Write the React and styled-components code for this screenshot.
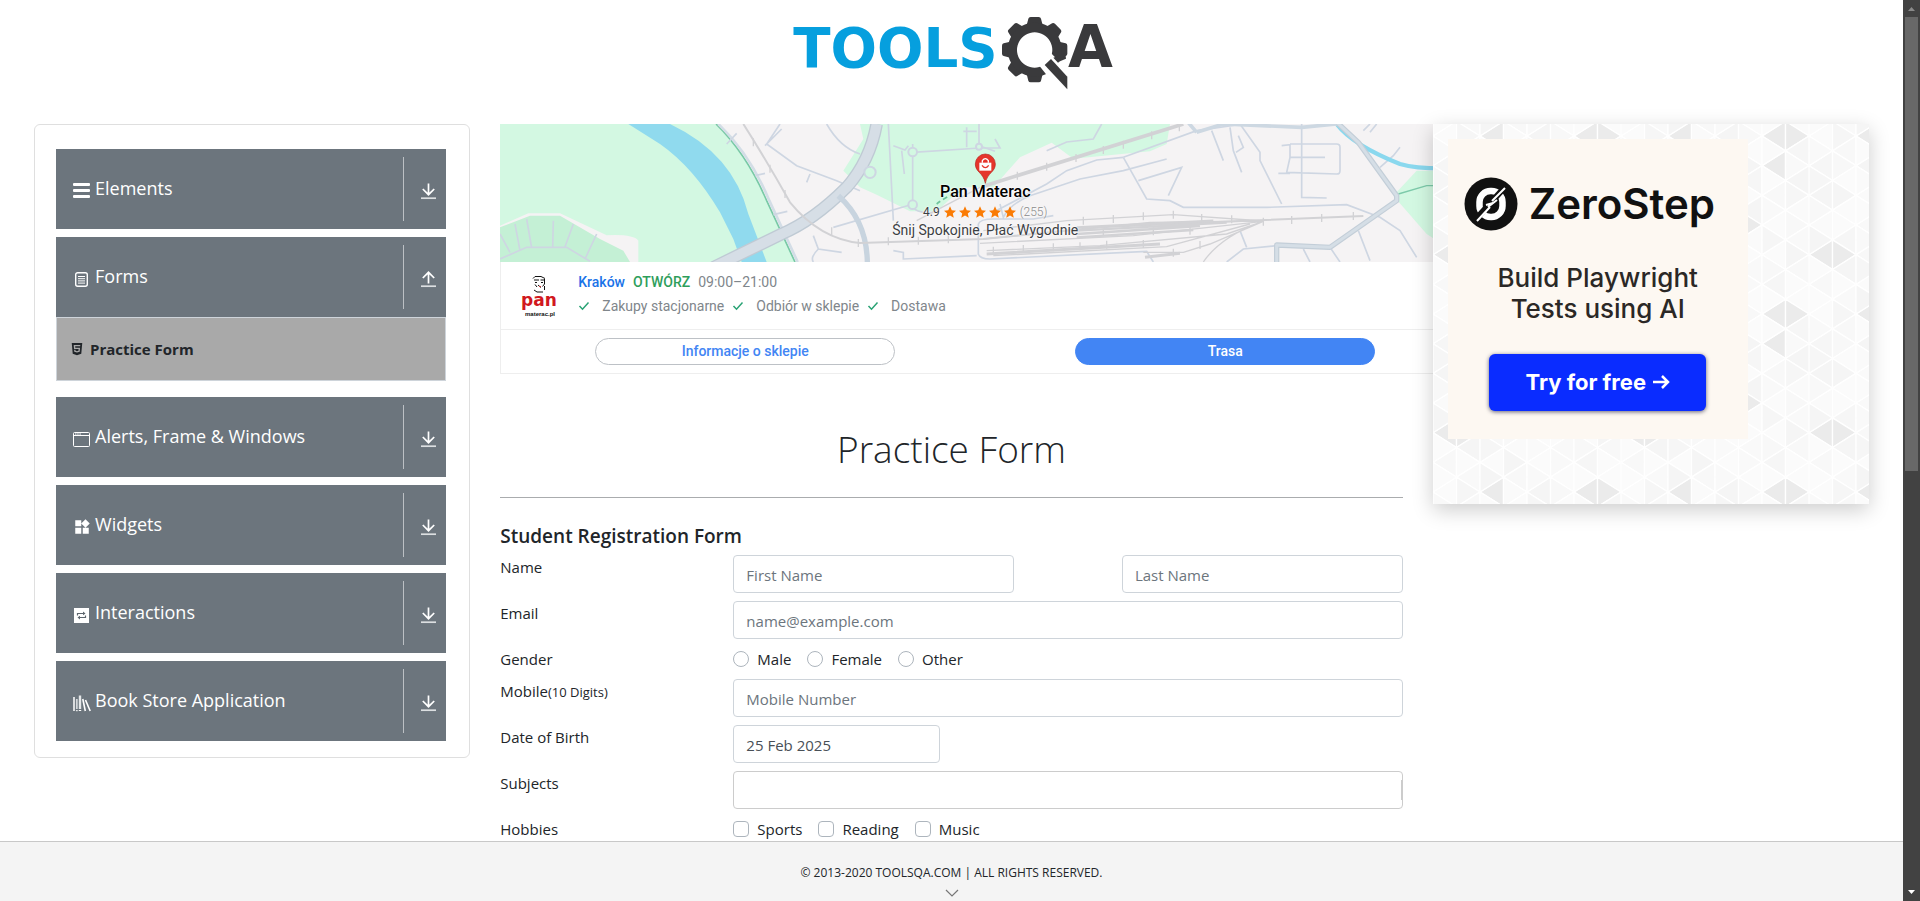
import React from "react";
import styled, { createGlobalStyle } from "styled-components";
import { MdWidgets } from "react-icons/md";
import { FaHtml5 } from "react-icons/fa";

const GlobalStyle = createGlobalStyle`
  *, *::before, *::after { box-sizing: border-box; }
  body {
    margin: 0;
    background: #fff;
    color: #212529;
    font-family: "Open Sans", "Noto Sans", sans-serif;
    font-size: 15px;
    line-height: 24px;
  }
`;

/* ---------- page frame ---------- */

const Shell = styled.div`
  display: flex;
  height: 100vh;
`;

const Page = styled.div`
  flex: 1;
  min-width: 0;
  display: flex;
  flex-direction: column;
  overflow: hidden;
`;

const Content = styled.div`
  flex: 1;
  min-height: 0;
  overflow: hidden;
`;

const Header = styled.header`
  display: flex;
  justify-content: center;
  height: 124px;
`;

const Columns = styled.div`
  display: grid;
  grid-template-columns: minmax(0, 1fr) minmax(0, 2fr) minmax(0, 1fr);
  align-items: start;
  padding: 0 1%;
`;

const Column = styled.div`
  padding: 0 15px;
  position: relative;
`;

const Footer = styled.footer`
  flex: none;
  display: flex;
  flex-direction: column;
  align-items: center;
  height: 60px;
  padding-top: 20px;
  background: #f4f4f4;
  border-top: 1px solid #c8c8c8;
  font-size: 12px;
  line-height: 22px;
`;

const Track = styled.div`
  flex: none;
  display: flex;
  flex-direction: column;
  align-items: center;
  justify-content: space-between;
  width: 17px;
  background: #424242;
`;

const Thumb = styled.div`
  width: 13px;
  height: 50.4%;
  background: #686868;
`;

const TrackArrow = styled.svg`
  display: block;
  flex: none;
  width: 17px;
  height: 17px;
`;

const TrackSpace = styled.div`
  flex: 1;
`;

/* ---------- sidebar ---------- */

const Card = styled.nav`
  display: flex;
  flex-direction: column;
  gap: 8px;
  padding: 24px 23px 16px 21px;
  border: 1px solid #dfdfdf;
  border-radius: 6px;
`;

const GroupButton = styled.button`
  display: flex;
  align-items: center;
  width: 100%;
  height: 80px;
  padding: 8px 9px 8px 17px;
  border: 0;
  background: #6c757d;
  color: #fff;
  font: inherit;
  font-size: 18px;
  text-align: left;
`;

const GroupIcon = styled.span`
  display: flex;
  width: 18px;
  padding-top: 4px;
  margin-right: 4px;
`;

const GroupLabel = styled.span`
  flex: 1;
  padding-bottom: 2px;
`;

const GroupArrow = styled.span`
  display: flex;
  align-items: center;
  height: 64px;
  padding: 4px 0 0 16px;
  border-left: 1px solid #bcc0c4;
`;

const SubLink = styled.a`
  display: flex;
  align-items: center;
  gap: 6px;
  height: 64px;
  margin-bottom: 8px;
  padding-left: 13px;
  border: 1px solid #ced4da;
  background: #a9a9a9;
  color: #212529;
  font-size: 15px;
  font-weight: 700;
  text-decoration: none;
`;

/* ---------- map banner ---------- */

const Banner = styled.section`
  width: 970px;
  height: 250px;
  font-family: Roboto, sans-serif;
`;

const MapArea = styled.div`
  position: relative;
  height: 138px;
`;

const MapDrawing = styled.svg`
  display: block;
  width: 100%;
  height: 100%;
`;

const Place = styled.div`
  position: absolute;
  inset: 57px 0 0;
  display: flex;
  flex-direction: column;
  align-items: center;
  color: #3c4043;
  font-size: 14px;
  line-height: 18px;
  text-shadow: 0 0 2px #fff, 0 0 2px #fff;
`;

const PlaceName = styled.div`
  color: #000;
  font-size: 16px;
  font-weight: 500;
  line-height: 22px;
`;

const Rating = styled.div`
  display: flex;
  align-items: center;
  gap: 4px;
  font-size: 12px;
`;

const Votes = styled.span`
  color: #8a8a8a;
  font-weight: 300;
`;

const StoreInfo = styled.div`
  display: flex;
  gap: 18px;
  height: 67px;
  padding: 8px 0 0 20px;
  border-left: 1px solid #eee;
`;

const StoreText = styled.div`
  font-size: 14px;
  line-height: 24px;
  color: #80868b;
`;

const StoreLine = styled.div`
  display: flex;
  align-items: center;
  gap: ${(p) => p.$gap}px;
`;

const City = styled.span`
  color: #1a73e8;
  font-weight: 500;
`;

const OpenNow = styled.span`
  color: #2e9e5b;
  font-weight: 500;
`;

const Feature = styled.span`
  display: flex;
  align-items: center;
  gap: 12px;
`;

const BannerActions = styled.div`
  display: grid;
  grid-template-columns: 1fr 1fr;
  justify-items: center;
  align-items: center;
  height: 45px;
  padding: 0 4px;
  border: 1px solid #eee;
`;

const PillLink = styled.a`
  width: 300px;
  border: 1px solid ${(p) => (p.$filled ? "#4285f4" : "#bdc1c6")};
  border-radius: 14px;
  background: ${(p) => (p.$filled ? "#4285f4" : "#fff")};
  color: ${(p) => (p.$filled ? "#fff" : "#4285f4")};
  font-size: 14px;
  font-weight: 500;
  line-height: 25px;
  text-align: center;
  text-decoration: none;
`;

/* ---------- form ---------- */

const Title = styled.h1`
  margin: 51px 0 24px;
  font-size: 37px;
  font-weight: 300;
  line-height: 48px;
  text-align: center;
`;

const Rule = styled.hr`
  margin: 0 0 26px;
  border: 0;
  border-top: 1px solid #aaacae;
`;

const FormHeading = styled.h2`
  margin: 0 0 7px;
  font-size: 19px;
  font-weight: 600;
  line-height: 24px;
`;

const Row = styled.div`
  display: grid;
  grid-template-columns: repeat(12, minmax(0, 1fr));
  margin: 0 -15px 8px;
`;

const Cell = styled.div`
  grid-column: ${(p) => (p.$start ? `${p.$start} / ` : "")} span ${(p) => p.$span};
  padding: 0 15px;
`;

const Small = styled.small`
  font-size: 13px;
`;

const Input = styled.input`
  display: block;
  width: ${(p) => (p.$short ? "207px" : "100%")};
  height: 38px;
  padding: 8px 12px 6px;
  border: 1px solid #ced4da;
  border-radius: 4px;
  background: #fff;
  color: #495057;
  font: inherit;
  &::placeholder { color: #6c757d; opacity: 1; }
`;

const SelectBox = styled.div`
  display: flex;
  align-items: center;
  height: 38px;
  border: 1px solid #ccc;
  border-radius: 4px;
`;

const BareInput = styled.input`
  flex: 1;
  min-width: 0;
  height: 24px;
  padding: 0 8px;
  border: 0;
  background: none;
  font: inherit;
`;

const Separator = styled.span`
  width: 1px;
  height: 20px;
  background: #ccc;
`;

const Choices = styled.div`
  display: flex;
  gap: 16px;
`;

const Choice = styled.label`
  display: flex;
  align-items: center;
  gap: 8px;
`;

const Tick = styled.input`
  appearance: none;
  width: 16px;
  height: 16px;
  margin: 0;
  border: 1px solid #adb5bd;
  border-radius: ${(p) => (p.type === "radio" ? "50%" : "4px")};
  background: #fff;
`;

/* ---------- right panel ---------- */

const Promo = styled.aside`
  position: relative;
  height: 380px;
  padding: 15px;
  background: #fafafa;
  box-shadow: 0 6px 20px rgba(0, 0, 0, 0.2);
`;

const PromoPattern = styled.svg`
  position: absolute;
  inset: 0;
  width: 100%;
  height: 100%;
`;

const PromoCard = styled.div`
  position: relative;
  display: flex;
  flex-direction: column;
  align-items: center;
  width: 300px;
  height: 300px;
  padding-top: 38px;
  background: #fdf8f2;
  font-family: Inter, sans-serif;
`;

const Brand = styled.div`
  display: flex;
  align-items: center;
  align-self: flex-start;
  gap: 11px;
  margin-left: 16px;
  color: #111;
  font-size: 42px;
  font-weight: 600;
  line-height: 54px;
`;

const Pitch = styled.p`
  margin: 31px 0 30px;
  color: #2b2826;
  font-size: 26px;
  font-weight: 500;
  line-height: 31px;
  text-align: center;
`;

const TryLink = styled.a`
  display: flex;
  align-items: center;
  justify-content: center;
  gap: 7px;
  width: 217px;
  height: 57px;
  padding-bottom: 2px;
  border-radius: 6px;
  background: #0a2cff;
  box-shadow: 0 1px 4px rgba(0, 0, 40, 0.6);
  color: #fff;
  font-size: 22px;
  font-weight: 700;
  text-decoration: none;
`;

/* ---------- drawings ---------- */

function Logo() {
  const teeth = [0, 45, 90, 135, 180, 225, 270, 315];
  return (
    <svg width="360" height="110" viewBox="4 0 1080 330" role="img" aria-label="ToolsQA">
      <g fontFamily="'DejaVu Sans', sans-serif" fontWeight="700">
        <text x="68" y="201" fontSize="164" fill="#069fde">TOOLS</text>
        <text x="892" y="201" fontSize="174" fill="#3a3a3c">A</text>
      </g>
      <g fill="#3a3a3c">
        {teeth.map((a) => (
          <path key={a} transform={`rotate(${a} 792 149)`} d="M768 76 L773 56 Q774 51 780 51 H804 Q810 51 811 56 L816 76 Z" />
        ))}
        <path fillRule="evenodd" d="M792 68 a81 81 0 1 0 0.1 0 Z M792 97 a53 53 0 1 1 -0.1 0 Z" />
      </g>
      <path d="M800 190 L838 156 L905 226 L905 290 L880 290 Z" fill="#fff" />
      <path d="M822 195 L841 177 L890 230 V268 Z" fill="#3a3a3c" />
      <path d="M862 188 L848 173 L884 160 L886 176 L868 184 Z" fill="#3a3a3c" />
    </svg>
  );
}

const ArrowToLine = ({ up }) => (
  <svg width="17" height="17" viewBox="0 0 17 17" fill="none" stroke="#fff">
    <path d={up ? "M8.500 12.500V1.500M2.800 7L8.500 1.300L14.200 7" : "M8.500 .500V11.500M2.800 6L8.500 11.700L14.200 6"} strokeWidth="1.700" />
    <path d="M1 15.200H16" strokeWidth="1.700" stroke="#dcdfe1" />
  </svg>
);

const BarsIcon = () => (
  <svg width="18" height="18" viewBox="0 0 18 18" fill="#fff">
    <rect x="0" y="1" width="17" height="3" rx="1" />
    <rect x="0" y="7" width="17" height="3" rx="1" />
    <rect x="0" y="13" width="17" height="3" rx="1" />
  </svg>
);

const FormIcon = () => (
  <svg width="17" height="17" viewBox="0 0 17 17" fill="none" stroke="#fff">
    <rect x="2.700" y="1.700" width="11.600" height="13.600" rx="2" strokeWidth="1.400" />
    <path d="M5 5.500H12M5 7.700H12M5 9.900H12M5 12.100H12" strokeWidth="1" />
  </svg>
);

const WindowIcon = () => (
  <svg width="17" height="17" viewBox="0 0 17 17" fill="none" stroke="#fff">
    <rect x="0.500" y="1.500" width="16" height="14" rx="1" />
    <path d="M1 4.500H16" />
    <path d="M2 3H8" strokeDasharray="1.500 .700" />
  </svg>
);

const RepeatIcon = () => (
  <svg width="17" height="17" viewBox="0 0 17 17" fill="none" stroke="#5c656d">
    <rect x="1" y="1" width="15" height="15" fill="#fff" stroke="none" />
    <path d="M4.500 8.500V6.500H11M12.500 8.500V10.500H6" strokeWidth="1.200" />
    <path d="M10 4.500L12.500 6.500L10 8.200ZM7 8.800L4.500 10.500L7 12.500Z" fill="#5c656d" stroke="none" />
  </svg>
);

const BooksIcon = () => (
  <svg width="18" height="18" viewBox="0 0 18 18" fill="none" stroke="#fff">
    <path d="M1 3V17" strokeWidth="1.500" />
    <path d="M3.800 5V15" strokeWidth="1.800" stroke="#d5d8db" />
    <path d="M3.800 16.200V17.200" strokeWidth="1.800" />
    <path d="M7 1.500V15" strokeWidth="2.400" stroke="#e6e8ea" />
    <path d="M7 16V17" strokeWidth="2.400" />
    <path d="M9.800 5L12.300 17" strokeWidth="1.600" />
    <path d="M12.500 6L17.200 17" strokeWidth="1.600" />
  </svg>
);

const Check = () => (
  <svg width="12" height="10" viewBox="0 0 12 10" fill="none" stroke="#2aa375" strokeWidth="1.500">
    <path d="M1.500 5L4.500 8.200L10.500 1.500" />
  </svg>
);

const Star = () => (
  <svg width="12" height="12" viewBox="0 0 24 24" fill="#fa7b05">
    <path d="M12 0.500L15.500 8.500L24 9.300L17.600 15L19.500 23.500L12 19L4.500 23.500L6.400 15L0 9.300L8.500 8.500Z" />
  </svg>
);

function StoreLogo() {
  return (
    <svg width="39" height="48" viewBox="0 0 39 48" role="img" aria-label="pan materac.pl">
      <g fill="none" stroke="#111" strokeWidth="1">
        <path d="M12 8.500L14 6.500H20L24 8.500M13 10H18M19.500 10H24M14 12.500H16M20 12.500H22M23.500 9V14L21.500 16.500M14 14.500L16 17M17 15L20 17.500M13 20L16 22H22M23.500 16V20" />
      </g>
      <path d="M18 16.500h2" stroke="#c33" />
      <text x="0" y="36" fontFamily="'DejaVu Sans', sans-serif" fontSize="17" fontWeight="700" fill="#d11820">pan</text>
      <text x="4" y="46" fontFamily="'Liberation Sans', sans-serif" fontSize="6" fontWeight="700" fill="#111">materac.pl</text>
    </svg>
  );
}

function CityMap() {
  const ticks = (pts) => pts.map(([x, y]) => `M${x} ${y - 12}v24`).join("");
  return (
    <MapDrawing viewBox="0 0 2910 414" preserveAspectRatio="none" aria-hidden="true">
      <rect width="2910" height="414" fill="#f5f3f4" />
      <g fill="#d3f8e2">
        <path d="M0 0H645Q740 90 800 230L885 414H415V350Q400 330 320 334L180 268H85L0 305Z" />
        <path d="M1080 0H2010L2000 60L1950 82L1720 104L1655 56L1560 100L1480 190L1390 190L1310 262L1230 262L1130 212L1080 190L1030 140L1090 45Z" />
        <path d="M2910 140L2750 140L2680 215L2780 330L2910 414Z" />
      </g>
      <path d="M0 310L90 275H180L300 345L370 380L390 414H0Z" fill="#c4f0d5" />
      <path d="M385 0H510Q700 90 745 270L800 414H725L700 345L660 265Q580 130 480 60Z" fill="#90daee" />
      <path d="M648 0Q740 90 800 230L885 414" fill="none" stroke="#78c9a6" strokeWidth="5" />
      <path d="M655 0Q750 90 808 230L893 414" fill="none" stroke="#d3dde6" strokeWidth="8" />
      <g fill="none" stroke="#ced6e2" strokeWidth="5">
        <path d="M0 330L30 385M290 330L255 405M0 405L80 370H200L270 412M80 285L95 372M160 290L158 372M45 300L60 380M220 300L195 368" />
        <path d="M840 0L800 60L890 125L1010 170L1080 200M845 15L795 65M980 0Q1020 70 1080 90M920 175L930 150M765 155L795 148M820 272L862 262M710 28L680 60" />
        <path d="M1165 0L1180 290M1180 65L1215 78L1225 65M1205 80L1213 150M1238 60V240M1238 85L1440 72H1500L1485 45M1240 240L1000 310M1238 240Q1240 270 1300 265" />
        <path d="M940 335L955 375L1025 385M955 375Q930 400 940 414M1180 380L1210 385V405L1430 395" />
        <path d="M1400 10V70M1437 0V65L1485 82M1390 22H1430" />
        <path d="M1640 80L1700 54L1780 45L1805 0M1480 265L1640 180L1700 140L1790 108L1870 100M1590 215L1740 165L1870 140L2000 105" />
        <path d="M1870 100L2090 20L2230 0M1870 100L1940 225L2010 230L2050 250H2300L2540 242L2640 280L2700 320L2750 400M1915 170L2045 130L2005 215" />
        <path d="M2135 20L2170 110M2190 10L2200 80L2225 145M2220 0L2280 85V110L2345 240M2215 35L2230 70L2208 85" />
        <path d="M2405 0V220L2480 222M2345 65L2370 62V100L2360 145L2510 150Q2520 150 2520 140V70Q2520 60 2510 60H2370M2370 100H2475M2335 148H2370" />
        <path d="M2640 130L2680 95L2700 70M2590 20L2610 0M2610 25L2630 0M2220 320L2240 370M2180 414L2230 375L2330 365M2410 375L2430 414M2490 370L2520 414M2575 320L2610 410" />
        <path d="M1435 300Q1440 285 1480 285H1600L1660 275M1435 300V390Q1440 405 1470 405L1940 382L1960 414M1500 240L1510 280Q1530 240 1590 215" />
      </g>
      <path d="M2510 0Q2560 65 2700 120Q2770 140 2910 130" fill="none" stroke="#8ad8ee" strokeWidth="13" />
      <path d="M2695 210L2780 185H2910" fill="none" stroke="#7dcaaa" strokeWidth="4" />
      <g fill="none" strokeLinejoin="round">
        <path d="M640 430L845 330Q940 290 1040 190Q1110 110 1130 0" stroke="#bfcad4" strokeWidth="38" />
        <path d="M640 430L845 330Q940 290 1040 190Q1110 110 1130 0" stroke="#d6dee6" strokeWidth="30" />
        <path d="M1015 215Q1100 290 1102 414" stroke="#c8d4df" strokeWidth="16" />
        <path d="M2505 -10L2575 55L2690 215V230L2490 370L2330 363V414" stroke="#c3ced8" strokeWidth="16" />
        <path d="M2505 -10L2575 55L2690 215V230L2490 370L2330 363V414" stroke="#d5dee6" strokeWidth="9" />
        <path d="M2090 25L2060 -10M2090 25L2170 0L2405 10L2510 0" stroke="#cdd8e2" strokeWidth="11" />
      </g>
      <g fill="#d3f8e2" stroke="#ced6e2" strokeWidth="6">
        <circle cx="1238" cy="84" r="13" /><circle cx="1238" cy="242" r="13" /><circle cx="1437" cy="68" r="9" />
        <circle cx="1110" cy="145" r="17" />
      </g>
      <g fill="none" stroke="#d2d2d5">
        <path d="M1455 185L2050 0" strokeWidth="11" />
        <path d="M730 0Q800 110 870 235Q960 345 1080 357L1450 345L1800 310L2240 290L2590 276" strokeWidth="6" />
        <path d="M1450 320L1700 290L2020 272L2290 291L1950 295L1450 345M1440 358L1900 335L2290 292L2130 360L2050 385H1930M1460 380L1800 365L2180 330L2290 292M1480 395L2000 368L2250 300M2110 414Q2160 340 2280 295M1250 290L1440 190" strokeWidth="4" />
        <path d="M1730 310L2140 290M1730 320L2180 296M1730 330L2100 306M1730 340L2080 318" strokeWidth="7" />
        <path d="M1460 390L1980 360M1935 400L2040 388" strokeWidth="9" />
        <path d={ticks([[760,55],[810,134],[855,210],[995,322],[1075,357],[1165,352],[1255,350],[1345,346],[1552,155],[1640,128],[1728,102],[1810,78],[1870,62],[1955,34],[2038,10],[1750,290],[1840,285],[1930,277],[2020,272],[2105,282],[2195,286],[2290,293],[2375,288],[2465,282],[2560,276],[1480,380],[1570,375],[1660,370],[1740,367],[1820,362],[1930,360],[2020,386],[2100,363],[1600,320],[1810,325],[1960,322],[2070,320]])} strokeWidth="4" />
      </g>
      <path d="M1310 240Q1340 215 1390 200" fill="none" stroke="#6fc49d" strokeWidth="5" strokeDasharray="14 10" />
      <path d="M1456 178C1450 145 1426 145 1426 120A30 30 0 0 1 1486 120C1486 145 1462 145 1456 178Z" fill="#e5352b" stroke="#b3261e" strokeWidth="2" />
      <path d="M1438 116H1474V140H1438Z" fill="#fff" />
      <path d="M1447 116V110Q1456 98 1465 110V116" fill="none" stroke="#fff" strokeWidth="4" />
      <path d="M1446 124Q1456 138 1466 124" fill="none" stroke="#e5352b" strokeWidth="4" />
    </MapDrawing>
  );
}

const TONES = ["#fbfbfb", "#f8f8f8", "#fafafa", "#f6f6f6", "#fbfbfb", "#f9f9f9", "#f5f5f5"];
const DARK_LEFT = ["2-0", "6-0", "6-1", "0-4"];
const DARK_RIGHT = ["7-0", "1-4", "5-3"];

function Triangles() {
  const w = 70.5;
  const h = 89;
  const cells = [];
  for (let c = 0; c < 8; c++) {
    for (let r = -1; r < 7; r++) {
      const row = (r + 6) % 6;
      const id = `${c}-${row}`;
      const even = c % 2 === 0;
      const leftY = (even ? 36 : -8.5) + r * h;
      const rightY = (even ? -8.5 : 36) + r * h;
      const x = c * w;
      const left = `${x},${leftY} ${x + w},${leftY - h / 2} ${x + w},${leftY + h / 2}`;
      const right = `${x + w},${rightY} ${x},${rightY - h / 2} ${x},${rightY + h / 2}`;
      const leftTone = DARK_LEFT.includes(id) ? "#ebebeb" : TONES[(c * 5 + row * 3) % 7];
      const rightTone = DARK_RIGHT.includes(id) ? "#ebebeb" : TONES[(c * 3 + row * 5) % 7];
      cells.push(<polygon key={`l${c}.${r}`} points={left} fill={leftTone} />);
      cells.push(<polygon key={`r${c}.${r}`} points={right} fill={rightTone} />);
    }
  }
  return (
    <PromoPattern aria-hidden="true">
      <defs>
        <pattern id="facets" width="564" height="534" patternUnits="userSpaceOnUse" patternTransform="scale(0.33333)">
          <g stroke="#fff" strokeWidth="4">{cells}</g>
        </pattern>
      </defs>
      <rect width="100%" height="100%" fill="url(#facets)" />
    </PromoPattern>
  );
}

const ZeroStepMark = () => (
  <svg width="54" height="54" viewBox="0 0 54 54">
    <circle cx="27" cy="27" r="26.500" fill="#111" />
    <rect x="15.500" y="14" width="23" height="26" rx="11" fill="none" stroke="#fff" strokeWidth="6.500" />
    <path d="M11 43L41 10" stroke="#111" strokeWidth="6" />
    <path d="M13 44L26 30M24 30L33 23M28 24L41 11M22 28L29 26" stroke="#fff" strokeWidth="2" fill="none" />
  </svg>
);

/* ---------- page ---------- */

const groups = [
  { label: "Elements", icon: <BarsIcon /> },
  { label: "Forms", icon: <FormIcon />, open: true },
  { label: "Alerts, Frame & Windows", icon: <WindowIcon /> },
  { label: "Widgets", icon: <MdWidgets size={18} /> },
  { label: "Interactions", icon: <RepeatIcon /> },
  { label: "Book Store Application", icon: <BooksIcon /> },
];

function Group({ label, icon, open }) {
  return (
    <div>
      <GroupButton type="button" aria-expanded={!!open}>
        <GroupIcon>{icon}</GroupIcon>
        <GroupLabel>{label}</GroupLabel>
        <GroupArrow><ArrowToLine up={open} /></GroupArrow>
      </GroupButton>
      {open && <SubLink href="#practice-form"><FaHtml5 size={14} />Practice Form</SubLink>}
    </div>
  );
}

function StoreBanner() {
  return (
    <Banner>
      <MapArea>
        <CityMap />
        <Place>
          <PlaceName>Pan Materac</PlaceName>
          <Rating>
            4.9
            <StoreLine $gap={3}>{[1, 2, 3, 4, 5].map((n) => <Star key={n} />)}</StoreLine>
            <Votes>(255)</Votes>
          </Rating>
          <div>Śnij Spokojnie, Płać Wygodnie</div>
        </Place>
      </MapArea>
      <StoreInfo>
        <StoreLogo />
        <StoreText>
          <StoreLine $gap={8}><City>Kraków</City><OpenNow>OTWÓRZ</OpenNow>09:00–21:00</StoreLine>
          <StoreLine $gap={8}>
            {["Zakupy stacjonarne", "Odbiór w sklepie", "Dostawa"].map((t) => (
              <Feature key={t}><Check />{t}</Feature>
            ))}
          </StoreLine>
        </StoreText>
      </StoreInfo>
      <BannerActions>
        <PillLink href="#store">Informacje o sklepie</PillLink>
        <PillLink href="#route" $filled>Trasa</PillLink>
      </BannerActions>
    </Banner>
  );
}

function RegistrationForm() {
  return (
    <form id="practice-form">
      <FormHeading>Student Registration Form</FormHeading>
      <Row>
        <Cell $span={3}><label htmlFor="first">Name</label></Cell>
        <Cell $span={4}><Input id="first" placeholder="First Name" /></Cell>
        <Cell $start={9} $span={4}><Input aria-label="Last Name" placeholder="Last Name" /></Cell>
      </Row>
      <Row>
        <Cell $span={3}><label htmlFor="email">Email</label></Cell>
        <Cell $span={9}><Input id="email" type="email" placeholder="name@example.com" /></Cell>
      </Row>
      <Row>
        <Cell $span={3}>Gender</Cell>
        <Cell $span={9}>
          <Choices role="radiogroup" aria-label="Gender">
            {["Male", "Female", "Other"].map((g) => (
              <Choice key={g}><Tick type="radio" name="gender" value={g} />{g}</Choice>
            ))}
          </Choices>
        </Cell>
      </Row>
      <Row>
        <Cell $span={3}><label htmlFor="mobile">Mobile<Small>(10 Digits)</Small></label></Cell>
        <Cell $span={9}><Input id="mobile" placeholder="Mobile Number" /></Cell>
      </Row>
      <Row>
        <Cell $span={3}><label htmlFor="birth">Date of Birth</label></Cell>
        <Cell $span={9}><Input id="birth" $short defaultValue="25 Feb 2025" /></Cell>
      </Row>
      <Row>
        <Cell $span={3}><label htmlFor="subjects">Subjects</label></Cell>
        <Cell $span={9}><SelectBox><BareInput id="subjects" /><Separator /></SelectBox></Cell>
      </Row>
      <Row>
        <Cell $span={3}>Hobbies</Cell>
        <Cell $span={9}>
          <Choices role="group" aria-label="Hobbies">
            {["Sports", "Reading", "Music"].map((h) => (
              <Choice key={h}><Tick type="checkbox" name={h} />{h}</Choice>
            ))}
          </Choices>
        </Cell>
      </Row>
    </form>
  );
}

export default function App() {
  return (
    <Shell>
      <GlobalStyle />
      <Page>
        <Content>
          <Header><Logo /></Header>
          <Columns>
            <Column>
              <Card>{groups.map((g) => <Group key={g.label} {...g} />)}</Card>
            </Column>
            <Column as="main">
              <StoreBanner />
              <Title>Practice Form</Title>
              <Rule />
              <RegistrationForm />
            </Column>
            <Column>
              <Promo>
                <Triangles />
                <PromoCard>
                  <Brand><ZeroStepMark />ZeroStep</Brand>
                  <Pitch>Build Playwright<br />Tests using AI</Pitch>
                  <TryLink href="#try">
                    Try for free
                    <svg width="17" height="16" viewBox="0 0 17 16" fill="none" stroke="#fff" strokeWidth="2.500">
                      <path d="M0 8H15M9 2L15 8L9 14" />
                    </svg>
                  </TryLink>
                </PromoCard>
              </Promo>
            </Column>
          </Columns>
        </Content>
        <Footer>
          <span>© 2013-2020 TOOLSQA.COM | ALL RIGHTS RESERVED.</span>
          <svg width="14" height="16" viewBox="0 0 14 16" fill="none" stroke="#777" strokeWidth="1.200">
            <path d="M1 6L7 12L13 6" />
          </svg>
        </Footer>
      </Page>
      <Track aria-hidden="true">
        <TrackArrow viewBox="0 0 17 17"><path d="M5 11L8.500 7L12 11Z" fill="#8a8a8a" /></TrackArrow>
        <Thumb />
        <TrackSpace />
        <TrackArrow viewBox="0 0 17 17"><path d="M5 6H12L8.500 10Z" fill="#fff" /></TrackArrow>
      </Track>
    </Shell>
  );
}
